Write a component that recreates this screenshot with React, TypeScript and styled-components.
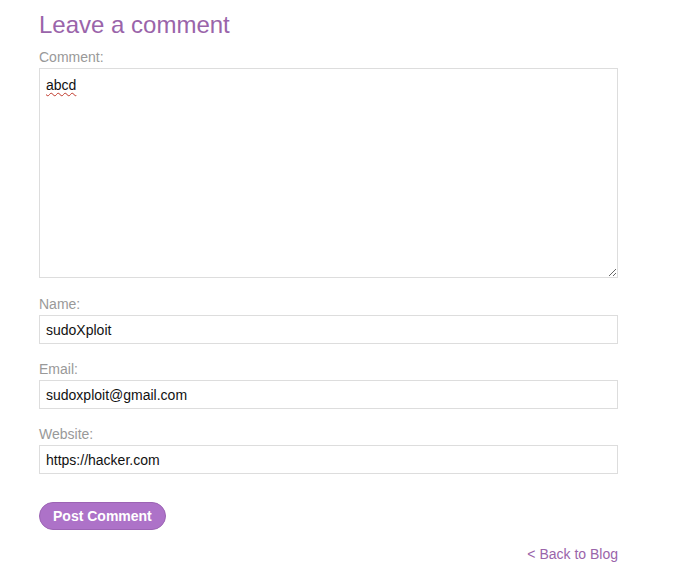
import React from 'react';
import styled, { createGlobalStyle } from 'styled-components';

const GlobalStyle = createGlobalStyle`
  html, body {
    margin: 0;
    padding: 0;
    background: #fff;
    font-family: 'Liberation Sans', Arial, sans-serif;
  }
`;

const App = () => {
  return (
    <>
      <GlobalStyle />
      <Page>
        <Heading>Leave a comment</Heading>
        <Form onSubmit={(e) => e.preventDefault()}>
          <Field $gapBelow={7}>
            <Label htmlFor="comment">Comment:</Label>
            <TextArea id="comment" defaultValue="abcd" />
          </Field>
          <Field>
            <Label htmlFor="name">Name:</Label>
            <Input id="name" defaultValue="sudoXploit" />
          </Field>
          <Field>
            <Label htmlFor="email">Email:</Label>
            <Input id="email" defaultValue="sudoxploit@gmail.com" />
          </Field>
          <Field>
            <Label htmlFor="website">Website:</Label>
            <Input id="website" defaultValue="https://hacker.com" />
          </Field>
          <Button type="submit">Post Comment</Button>
        </Form>
        <BackRow>
          <BackLink href="#">&lt; Back to Blog</BackLink>
        </BackRow>
      </Page>
    </>
  );
};

export default App;

const Page = styled.div`
  width: 579px;
  margin-left: 39px;
  padding-top: 11px;
`;

const Heading = styled.h2`
  margin: 0;
  font-size: 24px;
  font-weight: normal;
  color: #9a64aa;
  line-height: 27px;
`;

const Form = styled.form`
  display: flex;
  flex-direction: column;
  align-items: flex-start;
`;

const Field = styled.div<{ $gapBelow?: number }>`
  width: 100%;
  display: flex;
  flex-direction: column;
  margin-top: 10px;
  margin-bottom: ${(p) => p.$gapBelow ?? 6}px;
`;

const Label = styled.label`
  font-size: 14px;
  color: #999;
  line-height: 18px;
  margin-bottom: 2px;
`;

const fieldBase = `
  box-sizing: border-box;
  width: 100%;
  border: 1px solid #ddd;
  background: #fff;
  font-family: 'Liberation Sans', Arial, sans-serif;
  font-size: 14px;
  color: #111;
  padding: 6px;
  outline: none;
`;

const TextArea = styled.textarea`
  ${fieldBase}
  padding-top: 8px;
  height: 210px;
  resize: both;
  text-decoration: underline wavy #c0392b;
  text-decoration-thickness: 1px;
  text-underline-offset: 2px;
`;

const Input = styled.input`
  ${fieldBase}
  height: 29px;
`;

const Button = styled.button`
  margin-top: 22px;
  height: 28px;
  padding: 0 13px;
  border: 1px solid #9c64b4;
  border-radius: 14px;
  background: #ad72c8;
  color: #fff;
  font-family: 'Liberation Sans', Arial, sans-serif;
  font-size: 14px;
  font-weight: bold;
  cursor: pointer;
`;

const BackRow = styled.div`
  display: flex;
  justify-content: flex-end;
  margin-top: 16px;
`;

const BackLink = styled.a`
  font-size: 14px;
  color: #9a64aa;
  text-decoration: none;
`;
